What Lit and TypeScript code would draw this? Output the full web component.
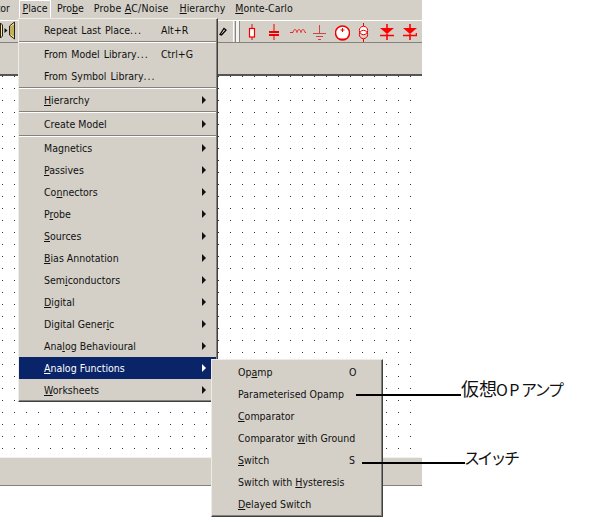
import { LitElement, html, css, svg } from "lit";
import { customElement } from "lit/decorators.js";

type Item = { label: unknown; key?: string; sub?: boolean; active?: boolean };

const u = (s: string) => html`<u>${s}</u>`;
const wide = (s: string) => html`<span class="wide">${s}<span class="dots">...</span></span>`;

const mainGroups: Item[][] = [
  [{ label: wide("Repeat Last Place"), key: "Alt+R" }],
  [
    { label: wide("From Model Library"), key: "Ctrl+G" },
    { label: wide("From Symbol Library") },
  ],
  [{ label: html`${u("H")}ierarchy`, sub: true }],
  [{ label: "Create Model", sub: true }],
  [
    { label: "Magnetics", sub: true },
    { label: html`${u("P")}assives`, sub: true },
    { label: html`Co${u("n")}nectors`, sub: true },
    { label: html`P${u("r")}obe`, sub: true },
    { label: html`${u("S")}ources`, sub: true },
    { label: html`${u("B")}ias Annotation`, sub: true },
    { label: html`Sem${u("i")}conductors`, sub: true },
    { label: html`${u("D")}igital`, sub: true },
    { label: html`Digital Gener${u("i")}c`, sub: true },
    { label: html`Ana${u("l")}og Behavioural`, sub: true },
    { label: html`${u("A")}nalog Functions`, sub: true, active: true },
    { label: html`${u("W")}orksheets`, sub: true },
  ],
];

const subItems: Item[] = [
  { label: html`Op${u("a")}mp`, key: "O" },
  { label: "Parameterised Opamp" },
  { label: html`${u("C")}omparator` },
  { label: html`Comparator ${u("w")}ith Ground` },
  { label: html`${u("S")}witch`, key: "S" },
  { label: html`Switch with ${u("H")}ysteresis` },
  { label: html`${u("D")}elayed Switch` },
];

const redIcons = [
  { w: 12, gap: 0, g: svg`<path d="M6 2v4M6 15v3" stroke="#e00" fill="none"/><rect x="3.500" y="6.500" width="5" height="8.500" fill="#fff" stroke="#e00" stroke-width="1.200"/>` },
  { w: 12, gap: 10, g: svg`<path d="M6 2v7M6 13v5" stroke="#e00" fill="none"/><path d="M1 10h10M1 13h10" stroke="#e00" stroke-width="2" fill="none"/>` },
  { w: 16, gap: 10, g: svg`<path d="M0 10.500h3c1-4 3-4 4 0c1-4 3-4 4 0c1-4 3-4 4 0h1" stroke="#e22" fill="none"/>` },
  { w: 13, gap: 7, g: svg`<path d="M6.500 3v8M0 11.500h13M3 14.500h7M5 17.500h3" stroke="#c44" fill="none"/>` },
  { w: 15, gap: 9, g: svg`<circle cx="7.500" cy="11" r="7" fill="#fff" stroke="#e00" stroke-width="1.500"/><path d="M3.500 16.500a7 7 0 0 0 8 0z" fill="#e00"/><path d="M5.500 8h4M7.500 6v4" stroke="#e00" fill="none"/>` },
  { w: 11, gap: 8, g: svg`<path d="M5.500 1v3M5.500 17v3" stroke="#e00" fill="none"/><circle cx="5.500" cy="8.500" r="4.200" fill="#fff" stroke="#e00"/><circle cx="5.500" cy="12.500" r="4.200" fill="none" stroke="#e00"/>` },
  { w: 14, gap: 11, g: svg`<path d="M0 6h14L7 12z" fill="#f00"/><path d="M0 13.500h14M7 2v4M7 12v6" stroke="#f00" stroke-width="1.600" fill="none"/>` },
  { w: 14, gap: 9, g: svg`<path d="M0 6h14L7 12z" fill="#f00"/><path d="M0 13.500h13.500V11M7 2v4M7 12v6" stroke="#f00" stroke-width="1.600" fill="none"/>` },
];

@customElement("app-root")
export class AppRoot extends LitElement {
  static styles = css`
    :host {
      display: block;
      position: relative;
      width: 615px;
      height: 525px;
      overflow: hidden;
      background: #fff;
      font-family: "DejaVu Sans Condensed", "DejaVu Sans", sans-serif;
      font-size: 10.500px;
      color: #111;
    }
    u { text-underline-offset: 1px; }
    .wide { word-spacing: 1px; }
    .dots { letter-spacing: 1px; }
    .window { width: 422px; display: flex; flex-direction: column; }
    .menubar {
      height: 20px;
      background: #d4d0c8;
      display: flex;
      align-items: flex-start;
      line-height: 16px;
    }
    .menubar span { white-space: nowrap; }
    .menubar .cut { width: 10px; overflow: hidden; display: flex; justify-content: flex-end; }
    .menubar .open {
      margin-left: 9px;
      width: 32px;
      height: 18px;
      box-sizing: border-box;
      text-align: center;
      border: 1px solid;
      border-color: #fff #fff transparent #fff;
      line-height: 15px;
    }
    .menubar .first { margin-left: 6px; }
    .menubar .next { margin-left: 10px; }
    .menubar .probe-ac { letter-spacing: 0.200px; }
    .menubar .hier { margin-left: 11px; }
    .toolbar {
      height: 23px;
      box-sizing: border-box;
      background: #d4d0c8;
      border-top: 1px solid #fff;
      border-bottom: 1px solid #85827c;
      display: flex;
      align-items: center;
    }
    .pen { margin-left: 219px; width: 8px; height: 20px; flex: none; }
    .grip {
      width: 8px;
      height: 21px;
      margin: 0 5px 0 6px;
      flex: none;
      box-sizing: border-box;
      background: linear-gradient(90deg, #fff 0 1px, #d4d0c8 1px 2px, #888 2px 3px, #f4f3ef 3px 6px, #888 6px 7px, #d4d0c8 7px);
    }
    .icons { display: flex; align-items: center; }
    .icons svg { height: 20px; display: block; flex: none; }
    .left-icon { position: absolute; left: 0; top: 21px; }
    .band {
      height: 33px;
      background: #d4d0c8;
      border-bottom: 2px solid #555;
      box-sizing: border-box;
    }
    .canvas {
      height: 381px;
      background-color: #fff;
      background-image: radial-gradient(circle at 0.500px 0.500px, #333 0.700px, transparent 0.800px);
      background-size: 12px 12px;
      background-position: 2px 0;
    }
    .status {
      height: 29px;
      box-sizing: border-box;
      background: #d4d0c8;
      border-top: 1px solid #f2f0ea;
      border-bottom: 1px solid #85827c;
    }
    .menu {
      position: absolute;
      background: #d4d0c8;
      box-sizing: border-box;
      border: 1px solid;
      border-color: #eeece6 #404040 #404040 #eeece6;
      box-shadow: inset -1px -1px 0 #85827c;
    }
    .main { left: 18px; top: 18px; width: 200px; height: 384px; }
    .sub { left: 211px; top: 359px; width: 172px; height: 158px; z-index: 2; padding-top: 1px; }
    .row {
      height: 22px;
      display: flex;
      align-items: center;
      padding-left: 25px;
      position: relative;
      white-space: nowrap;
    }
    .main .row { margin-right: 1px; }
    .sub .row { padding-left: 26px; }
    .row.active { background: #0a246a; color: #fff; }
    .label { flex: none; }
    .key { position: absolute; left: 142px; }
    .sub .key { left: 137px; }
    .arrow {
      position: absolute;
      right: 10px;
      top: 7px;
      width: 0;
      height: 0;
      border-left: 4px solid #111;
      border-top: 4px solid transparent;
      border-bottom: 4px solid transparent;
    }
    .row.active .arrow { border-left-color: #fff; }
    .sep {
      height: 2px;
      background: linear-gradient(#85827c 0 1px, #fff 1px 2px);
      margin-right: 1px;
    }
    .note {
      position: absolute;
      font-family: "Noto Sans CJK JP", sans-serif;
      font-size: 16px;
      line-height: 20px;
      color: #111;
      white-space: nowrap;
      z-index: 3;
    }
    .note.n1 { left: 461px; top: 378px; }
    .note.n2 { left: 464px; top: 447px; letter-spacing: -2.700px; }
    .kanji { font-size: 18px; letter-spacing: 0; }
    .kana { letter-spacing: -2px; }
    .latin { letter-spacing: 1.500px; margin-left: -1px; }
    .line { position: absolute; height: 2px; background: #000; z-index: 3; }
    .line.l1 { left: 356px; width: 105px; top: 394px; }
    .line.l2 { left: 362px; width: 103px; top: 462px; }
  `;

  private row(i: Item) {
    return html`<div class="row ${i.active ? "active" : ""}">
      <span class="label">${i.label}</span>
      ${i.key ? html`<span class="key">${i.key}</span>` : ""}
      ${i.sub ? html`<span class="arrow"></span>` : ""}
    </div>`;
  }

  render() {
    return html`
      <div class="window">
        <div class="menubar">
          <span class="cut">tor</span>
          <span class="open">${u("P")}lace</span>
          <span class="first">Pro${u("b")}e</span>
          <span class="next probe-ac">Probe ${u("A")}C/Noise</span>
          <span class="hier">${u("H")}ierarchy</span>
          <span class="next">${u("M")}onte-Carlo</span>
        </div>
        <div class="toolbar">
          <svg class="pen" viewBox="0 0 8 20">
            <path d="M1 12.500l4-6 2 1.500-4.500 5z" fill="#fff" stroke="#000" stroke-width="1.300"/>
          </svg>
          <div class="grip"></div>
          <div class="icons">
            ${redIcons.map(
              (p) =>
                html`<svg
                  viewBox="0 0 ${p.w} 20"
                  width="${p.w}"
                  style="margin-left:${p.gap}px"
                >
                  ${p.g}
                </svg>`
            )}
          </div>
        </div>
        <div class="band"></div>
        <div class="canvas"></div>
        <div class="status"></div>
      </div>
      <svg class="left-icon" width="16" height="20" viewBox="0 0 16 20">
        <path d="M0.500 2v15l2-2V4z" fill="#ffe680" stroke="#222"/>
        <path d="M4.500 7v5l3-2.500z" fill="#111"/>
        <path d="M14.500 1v17l-5-4V5z" fill="#ffe680" stroke="#222"/>
        <path d="M11 5v9M13 4v11" stroke="#8a7a30" fill="none"/>
      </svg>
      <div class="menu main">
        ${mainGroups.map(
          (g, n) => html`${n ? html`<div class="sep"></div>` : ""}${g.map((i) => this.row(i))}`
        )}
      </div>
      <div class="menu sub">${subItems.map((i) => this.row(i))}</div>
      <div class="line l1"></div>
      <div class="line l2"></div>
      <div class="note n1"><span class="kanji">仮想</span><span class="latin">OP</span><span class="kana">アンプ</span></div>
      <div class="note n2">スイッチ</div>
    `;
  }
}
